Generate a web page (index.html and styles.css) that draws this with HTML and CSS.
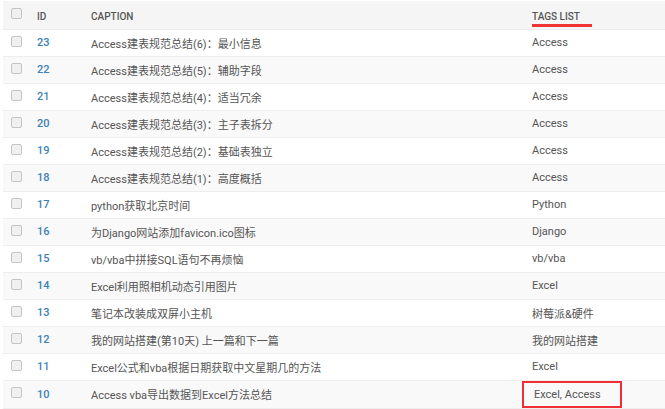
FILE: index.html
```html
<!DOCTYPE html>
<html>
<head>
<meta charset="utf-8">
<link rel="stylesheet" href="styles.css">
</head>
<body>
<table class="list">
  <thead>
    <tr>
      <th class="c-check"><span class="cb"></span></th>
      <th class="c-id">ID</th>
      <th class="c-cap">CAPTION</th>
      <th class="c-tags"><span class="mark-line">TAGS LIST</span></th>
    </tr>
  </thead>
  <tbody>
    <tr><td class="c-check"><span class="cb"></span></td><td class="c-id">23</td><td class="c-cap">Access建表规范总结(6)：最小信息</td><td class="c-tags">Access</td></tr>
    <tr><td class="c-check"><span class="cb"></span></td><td class="c-id">22</td><td class="c-cap">Access建表规范总结(5)：辅助字段</td><td class="c-tags">Access</td></tr>
    <tr><td class="c-check"><span class="cb"></span></td><td class="c-id">21</td><td class="c-cap">Access建表规范总结(4)：适当冗余</td><td class="c-tags">Access</td></tr>
    <tr><td class="c-check"><span class="cb"></span></td><td class="c-id">20</td><td class="c-cap">Access建表规范总结(3)：主子表拆分</td><td class="c-tags">Access</td></tr>
    <tr><td class="c-check"><span class="cb"></span></td><td class="c-id">19</td><td class="c-cap">Access建表规范总结(2)：基础表独立</td><td class="c-tags">Access</td></tr>
    <tr><td class="c-check"><span class="cb"></span></td><td class="c-id">18</td><td class="c-cap">Access建表规范总结(1)：高度概括</td><td class="c-tags">Access</td></tr>
    <tr><td class="c-check"><span class="cb"></span></td><td class="c-id">17</td><td class="c-cap">python获取北京时间</td><td class="c-tags">Python</td></tr>
    <tr><td class="c-check"><span class="cb"></span></td><td class="c-id">16</td><td class="c-cap">为Django网站添加favicon.ico图标</td><td class="c-tags">Django</td></tr>
    <tr><td class="c-check"><span class="cb"></span></td><td class="c-id">15</td><td class="c-cap">vb/vba中拼接SQL语句不再烦恼</td><td class="c-tags">vb/vba</td></tr>
    <tr><td class="c-check"><span class="cb"></span></td><td class="c-id">14</td><td class="c-cap">Excel利用照相机动态引用图片</td><td class="c-tags">Excel</td></tr>
    <tr><td class="c-check"><span class="cb"></span></td><td class="c-id">13</td><td class="c-cap">笔记本改装成双屏小主机</td><td class="c-tags">树莓派&amp;硬件</td></tr>
    <tr><td class="c-check"><span class="cb"></span></td><td class="c-id">12</td><td class="c-cap">我的网站搭建(第10天) 上一篇和下一篇</td><td class="c-tags">我的网站搭建</td></tr>
    <tr><td class="c-check"><span class="cb"></span></td><td class="c-id">11</td><td class="c-cap">Excel公式和vba根据日期获取中文星期几的方法</td><td class="c-tags">Excel</td></tr>
    <tr><td class="c-check"><span class="cb"></span></td><td class="c-id">10</td><td class="c-cap">Access vba导出数据到Excel方法总结</td><td class="c-tags"><span class="mark-box">Excel, Access</span></td></tr>
  </tbody>
</table>
</body>
</html>
```
FILE: styles.css
```css
html, body {
  margin: 0;
  padding: 0;
  background: #fff;
}
body {
  padding: 1px 0 0 3px;
  font-family: Roboto, "Noto Sans CJK SC", sans-serif;
  font-size: 11px;
  color: #555;
}
.list {
  border-collapse: collapse;
  width: 662px;
  table-layout: fixed;
}
.list th, .list td {
  padding: 0;
  text-align: left;
  vertical-align: middle;
  white-space: nowrap;
}
.list thead tr {
  background: #f5f5f5;
  height: 28px;
}
.list th {
  font-size: 10px;
  font-weight: 500;
  color: #555;
  padding-top: 3px;
  border-bottom: 1px solid #ececec;
}
.list th.c-check { padding-top: 0; }
.list tbody tr {
  height: 27px;
}
.list td {
  border-bottom: 1px solid #eeeeee;
}
.list tbody tr:nth-child(even) {
  background: #f9f9f9;
}
.list .c-check { width: 26px; padding-left: 8px; }
.c-id { width: 54px; }
.c-cap { width: 441px; }
td.c-id {
  color: #3b82b8;
  font-weight: 500;
  font-size: 11px;
}
.cb {
  display: block;
  width: 9px;
  height: 9px;
  border: 1px solid #c4c4c4;
  border-radius: 2px;
  background: #f0f0f0;
  margin-top: -3px;
}
.c-tags { position: relative; }
.mark-line {
  display: inline-block;
  position: relative;
}
.mark-line::after {
  content: "";
  position: absolute;
  left: 0;
  width: 60px;
  bottom: -5px;
  height: 3px;
  background: #f03333;
}
.mark-box {
  display: inline-block;
  margin-left: -10px;
  padding: 5px 10px 5px 10px;
  width: 76px;
  border: 2px solid #ee2f35;
}
```
